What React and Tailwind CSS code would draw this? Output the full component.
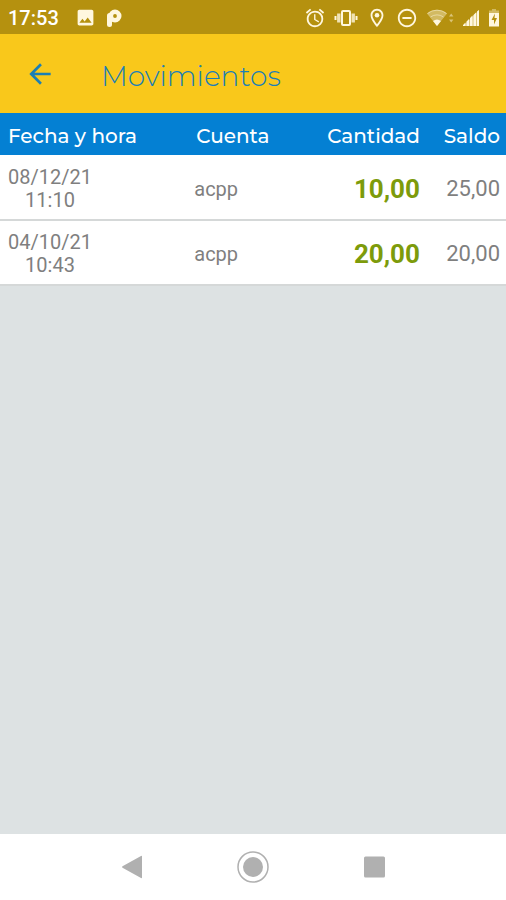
import React from 'react';
import {
  MdAlarm,
  MdArrowBack,
  MdImage,
  MdOutlineLocationOn,
  MdRemoveCircleOutline,
} from 'react-icons/md';

const movements = [
  { date: '08/12/21', time: '11:10', account: 'acpp', amount: '10,00', balance: '25,00' },
  { date: '04/10/21', time: '10:43', account: 'acpp', amount: '20,00', balance: '20,00' },
];

const ParkingIcon = () => (
  <svg viewBox="0 0 16 18" className="w-4 h-[18px]" fill="none" aria-hidden="true">
    <path d="M3.500 15.500V6.500" stroke="currentColor" strokeWidth="5" strokeLinecap="round" />
    <circle cx="9" cy="7" r="4.200" stroke="currentColor" strokeWidth="4.600" />
  </svg>
);

const VibrateIcon = () => (
  <svg viewBox="0 0 24 18" className="w-6 h-[18px]" fill="none" stroke="currentColor" strokeWidth="2" aria-hidden="true">
    <rect x="8" y="2" width="8" height="14" rx="1" />
    <path d="M4.800 4.500v9M19.200 4.500v9" strokeWidth="3.400" opacity="0.8" />
    <path d="M1.500 7v4M22.500 7v4" />
  </svg>
);

const WifiIcon = () => (
  <svg viewBox="0 0 28 20" className="w-7 h-5" aria-hidden="true">
    <path d="M11 18 1 5.500a15.500 15.500 0 0 1 20 0z" fill="currentColor" opacity="0.4" />
    <path d="M1.500 5.500a15.200 15.200 0 0 1 19 0M4.500 9a11 11 0 0 1 13 0" fill="none" stroke="currentColor" strokeWidth="1" opacity="0.5" />
    <path d="m11 18-4-5a6.500 6.500 0 0 1 8 0z" fill="currentColor" />
    <path d="m23 8.500 2.200-3 2.200 3zM23 11.500l2.200 3 2.200-3z" fill="currentColor" opacity="0.5" />
  </svg>
);

const SignalIcon = () => (
  <svg viewBox="0 0 18 18" className="w-[18px] h-[18px]" fill="currentColor" aria-hidden="true">
    <path d="M1 17 17 1v16z" opacity="0.5" />
    <path d="M1 17v-1l2.500-2.500V17zM4.500 17v-4.500L7 10v7zM8 17V9l2.500-2.500V17zM11.500 17V6L14 3.500V17zM15 17V2.500L17 1v16z" />
  </svg>
);

const BatteryIcon = () => (
  <svg viewBox="0 0 12 20" className="w-3 h-5" aria-hidden="true">
    <path d="M4 1h4v1.500h3V6H1V2.500h3z" fill="currentColor" opacity="0.4" />
    <path d="M1 5h10v13.500H1z" fill="currentColor" />
    <path d="M7 5.500 3.500 12H6v4.500L9 10H6.500z" fill="#b5910f" />
  </svg>
);

/**
 * System status bar with the clock, notifications and device state.
 */
const StatusBar = () => (
  <div className="h-[34px] pt-px bg-[#b5910f] text-[#fff7df] flex items-center pl-2 pr-[6px]">
    <span className="text-xl leading-6 font-medium text-white">17:53</span>
    <div className="flex items-center gap-[10px] ml-4">
      <MdImage className="w-[21px] h-[21px]" />
      <ParkingIcon />
    </div>
    <div className="flex items-center gap-2 ml-auto">
      <MdAlarm className="w-[22px] h-[22px]" />
      <VibrateIcon />
      <MdOutlineLocationOn className="w-[22px] h-[22px]" />
      <MdRemoveCircleOutline className="w-[22px] h-[22px]" />
      <WifiIcon />
      <SignalIcon />
      <BatteryIcon />
    </div>
  </div>
);

/**
 * Table of account movements, newest first.
 */
const MovementsTable = () => (
  <table className="w-full table-fixed bg-white">
    <thead className="bg-[#0480d3] text-white text-xl leading-6 font-[Montserrat,Inter,sans-serif]">
      <tr className="h-[42px]">
        <th scope="col" className="w-[38%] pl-2 pt-1 text-left font-medium">Fecha y hora</th>
        <th scope="col" className="w-[24%] pl-1 pt-1 text-left font-medium">Cuenta</th>
        <th scope="col" className="w-[21%] pt-1 text-right font-medium">Cantidad</th>
        <th scope="col" className="w-[17%] pr-[6px] pt-1 text-right font-medium">Saldo</th>
      </tr>
    </thead>
    <tbody className="text-[#7f7f7f]">
      {movements.map((item) => (
        <tr key={item.date} className="h-[65px] border-b-2 border-[#d5d8d8]">
          <td className="pl-2 pt-[3px] text-xl leading-[23px]">
            <div className="w-fit text-center">
              {item.date}
              <br />
              {item.time}
            </div>
          </td>
          <td className="pl-[2px] pt-[3px] text-xl">{item.account}</td>
          <td className="pt-[3px] text-[26px] leading-8 font-bold text-right text-[#7d9b0b]">{item.amount}</td>
          <td className="pr-[6px] pt-[3px] text-[22px] leading-8 text-right">{item.balance}</td>
        </tr>
      ))}
    </tbody>
  </table>
);

const NavigationBar = () => (
  <nav className="h-[66px] bg-white text-[#b0b0b0] flex items-center justify-center gap-[88px]">
    <button type="button" aria-label="Atrás" className="w-8 h-8">
      <svg viewBox="0 0 32 32" className="w-8 h-8" fill="currentColor">
        <path d="M5.500 15.200 24 5q1-.5 1 .5v21q0 1-1 .5L5.500 16.800q-1-.8 0-1.600z" />
      </svg>
    </button>
    <button type="button" aria-label="Inicio" className="w-8 h-8">
      <svg viewBox="0 0 32 32" className="w-8 h-8">
        <circle cx="16" cy="16" r="15" fill="none" stroke="currentColor" strokeWidth="1.500" />
        <circle cx="16" cy="16" r="10" fill="currentColor" />
      </svg>
    </button>
    <button type="button" aria-label="Recientes" className="w-8 h-8">
      <svg viewBox="0 0 32 32" className="w-8 h-8" fill="currentColor">
        <rect x="7" y="5.500" width="21" height="21" rx="1.500" />
      </svg>
    </button>
  </nav>
);

const App = () => {
  return (
    <div className="min-h-screen flex flex-col bg-[#dde2e3] font-[Roboto,sans-serif]">
      <StatusBar />
      <header className="h-[79px] bg-[#f9c81b] text-[#1c7fb5] flex items-center pl-6">
        <button type="button" aria-label="Volver" className="w-8 h-8">
          <MdArrowBack className="w-8 h-8" />
        </button>
        <h1 className="ml-[45px] pt-1 text-[28px] leading-9 font-light font-[Montserrat,Inter,sans-serif]">
          Movimientos
        </h1>
      </header>
      <main className="flex-1">
        <MovementsTable />
      </main>
      <NavigationBar />
    </div>
  );
};

export default App;
